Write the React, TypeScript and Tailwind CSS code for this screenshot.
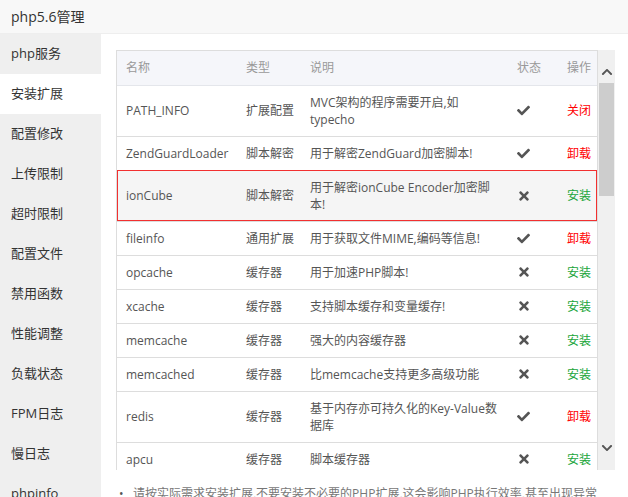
import { FaCheck, FaTimes, FaChevronUp, FaChevronDown } from 'react-icons/fa';

type Ext = {
  name: string;
  type: string;
  desc: string[];
  on: boolean;
  action: '关闭' | '卸载' | '安装';
  selected?: boolean;
};

const exts: Ext[] = [
  { name: 'PATH_INFO', type: '扩展配置', desc: ['MVC架构的程序需要开启,如', 'typecho'], on: true, action: '关闭' },
  { name: 'ZendGuardLoader', type: '脚本解密', desc: ['用于解密ZendGuard加密脚本!'], on: true, action: '卸载' },
  { name: 'ionCube', type: '脚本解密', desc: ['用于解密ionCube Encoder加密脚', '本!'], on: false, action: '安装', selected: true },
  { name: 'fileinfo', type: '通用扩展', desc: ['用于获取文件MIME,编码等信息!'], on: true, action: '卸载' },
  { name: 'opcache', type: '缓存器', desc: ['用于加速PHP脚本!'], on: false, action: '安装' },
  { name: 'xcache', type: '缓存器', desc: ['支持脚本缓存和变量缓存!'], on: false, action: '安装' },
  { name: 'memcache', type: '缓存器', desc: ['强大的内容缓存器'], on: false, action: '安装' },
  { name: 'memcached', type: '缓存器', desc: ['比memcache支持更多高级功能'], on: false, action: '安装' },
  { name: 'redis', type: '缓存器', desc: ['基于内存亦可持久化的Key-Value数', '据库'], on: true, action: '卸载' },
  { name: 'apcu', type: '缓存器', desc: ['脚本缓存器'], on: false, action: '安装' },
];

const menu = ['php服务', '安装扩展', '配置修改', '上传限制', '超时限制', '配置文件', '禁用函数', '性能调整', '负载状态', 'FPM日志', '慢日志', 'phpinfo'];

function Sidebar() {
  return (
    <div className="w-[101px] shrink-0 bg-[#efefef]">
      {menu.map((m) => (
        <div
          key={m}
          className={`h-10 flex items-center pl-[11px] text-[13px] text-[#333] ${m === '安装扩展' ? 'bg-white' : ''}`}
        >
          {m}
        </div>
      ))}
    </div>
  );
}

function Scrollbar() {
  return (
    <div className="w-[17px] h-[420px] bg-[#f0f0f0] flex flex-col items-center">
      <div className="h-[33px] flex items-center justify-center pt-[10px]">
        <FaChevronUp className="text-[#555] text-[12px]" />
      </div>
      <div className="w-[15px] h-[113px] bg-[#cdcdcd]" />
      <div className="flex-1" />
      <div className="h-[40px] flex items-center justify-center pb-[4px]">
        <FaChevronDown className="text-[#555] text-[12px]" />
      </div>
    </div>
  );
}

function ExtTable() {
  const th = 'h-[34px] px-[9px] text-left font-normal text-[#999] text-[12px] whitespace-nowrap border-b border-[#e4e6eb]';
  const td = 'px-[9px] py-[8px] leading-[17px] whitespace-nowrap border-b border-[#ddd]';
  return (
    <div className="flex">
      <div className="w-[482px] h-[420px] overflow-hidden border-l border-r border-t border-[#ddd]">
        <table className="w-full border-collapse table-fixed text-[12px] text-[#555]">
          <colgroup>
            <col className="w-[120px]" />
            <col className="w-[64px]" />
            <col className="w-[207px]" />
            <col className="w-[50px]" />
            <col />
          </colgroup>
          <thead className="bg-[#f5f6fa]">
            <tr>
              <th className={th}>名称</th>
              <th className={th}>类型</th>
              <th className={th}>说明</th>
              <th className={th}>状态</th>
              <th className={th}>操作</th>
            </tr>
          </thead>
          <tbody>
            {exts.map((e) => (
              <tr
                key={e.name}
                className={e.selected ? 'bg-[#f5f5f5] outline outline-1 outline-[#f23030] -outline-offset-1' : ''}
              >
                <td className={td}>{e.name}</td>
                <td className={td}>{e.type}</td>
                <td className={td}>
                  {e.desc.map((d) => (
                    <div key={d}>{d}</div>
                  ))}
                </td>
                <td className={td}>
                  {e.on ? (
                    <FaCheck className="text-[#555] text-[13px]" />
                  ) : (
                    <FaTimes className="text-[#555] text-[14px]" />
                  )}
                </td>
                <td className={`${td} ${e.action === '安装' ? 'text-[#20a53a]' : 'text-[#f00]'}`}>
                  {e.action}
                </td>
              </tr>
            ))}
          </tbody>
        </table>
      </div>
      <Scrollbar />
    </div>
  );
}

export default function App() {
  return (
    <div
      className="w-[628px] h-[497px] overflow-hidden bg-white flex flex-col"
      style={{ fontFamily: '"Open Sans", "Noto Sans CJK SC", sans-serif' }}
    >
      <div className="h-[34px] shrink-0 bg-[#f8f8f8] border-b border-[#eee] flex items-center pl-[11px] text-[14px] text-[#333]">
        php5.6管理
      </div>
      <div className="flex flex-1 min-h-0">
        <Sidebar />
        <div className="flex-1 pl-[15px] pt-[16px]">
          <ExtTable />
          <div className="flex items-center mt-[15px] text-[12px] text-[#777] whitespace-nowrap">
            <span className="w-[17px] pl-[3px] text-[#555]">•</span>
            <span>请按实际需求安装扩展,不要安装不必要的PHP扩展,这会影响PHP执行效率,甚至出现异常</span>
          </div>
        </div>
      </div>
    </div>
  );
}
